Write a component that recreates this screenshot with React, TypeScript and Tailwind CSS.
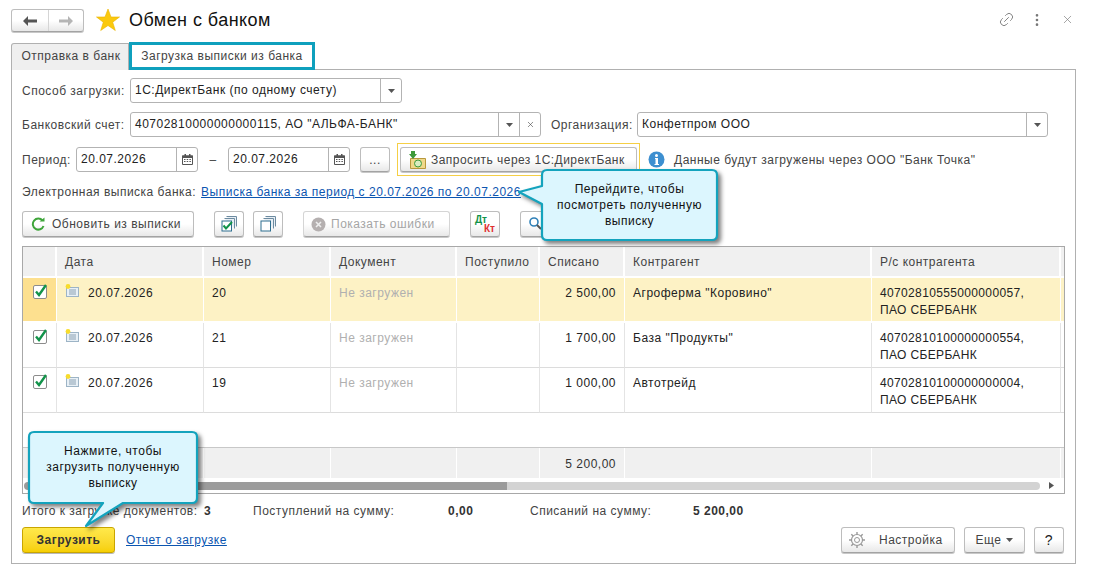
import { Link2, X, MoreVertical } from "lucide-react";
import type { ReactNode } from "react";

const font = { fontFamily: '"Liberation Sans", Arial, sans-serif' };

function Btn({ className = "", children }: { className?: string; children: ReactNode }) {
  return (
    <div
      className={
        "flex items-center justify-center rounded-[3px] border border-[#bdbdbd] border-b-[#a3a3a3] bg-gradient-to-b from-white via-white to-[#e8e8e8] shadow-[0_1px_0_#c8c8c8] " +
        className
      }
    >
      {children}
    </div>
  );
}

function Caret({ color = "#555" }: { color?: string }) {
  return (
    <svg width="7" height="4" viewBox="0 0 7 4">
      <path d="M0 0h7L3.5 4z" fill={color} />
    </svg>
  );
}

function CalendarIcon() {
  return (
    <svg width="11" height="11" viewBox="0 0 11 11">
      <path d="M0.5 2h10v8.5h-10z" fill="#fff" stroke="#555" />
      <rect x="0" y="1.5" width="11" height="2.5" fill="#555" />
      <rect x="2.5" y="0" width="1.5" height="2" fill="#555" />
      <rect x="7" y="0" width="1.5" height="2" fill="#555" />
      <path d="M2 5.5h1.5M4.7 5.5h1.5M7.4 5.5h1.5M2 7.5h1.5M4.7 7.5h1.5M7.4 7.5h1.5" stroke="#555" />
    </svg>
  );
}

function Field({ className = "", text, children }: { className?: string; text: string; children?: ReactNode }) {
  return (
    <div className={"flex h-[25px] items-stretch rounded-[3px] border border-[#b3b3b3] bg-white " + className}>
      <div className="flex-1 truncate pl-[4px] leading-[22px] text-[#222]">{text}</div>
      {children}
    </div>
  );
}

function FieldBtn({ children, w = "w-[21px]" }: { children: ReactNode; w?: string }) {
  return <div className={"flex items-center justify-center border-l border-[#b3b3b3] " + w}>{children}</div>;
}

function Star() {
  return (
    <svg width="24" height="24" viewBox="0 0 24 24">
      <path d="M12 1l3 8h8.5l-6.8 5.2 2.6 8.3L12 17.5l-7.3 5 2.6-8.3L.5 9H9z" fill="#fbc90e" stroke="#e9b300" strokeWidth="0.6" />
    </svg>
  );
}

function DocMark() {
  return (
    <svg width="14" height="13" viewBox="0 0 14 13" className="shrink-0">
      <rect x="1.5" y="3.5" width="12" height="9" fill="#e8f0f6" stroke="#9db4c6" />
      <path d="M4 6h7M4 8h7M4 10h7" stroke="#8aa0b2" />
      <circle cx="3" cy="2.5" r="2.4" fill="#f7dc2c" />
    </svg>
  );
}

function CheckBox() {
  return (
    <svg width="16" height="16" viewBox="0 0 16 16">
      <rect x="1.5" y="2.5" width="13" height="13" rx="1.5" fill="#fff" stroke="#8c8c8c" />
      <path d="M4 8.5l3 3.5L14 2" fill="none" stroke="#12934a" strokeWidth="2.4" />
    </svg>
  );
}

const columns = "grid-cols-[34px_147px_127px_126px_83px_85px_247px_189px_minmax(0,1fr)]";

const rows = [
  { num: "20", sum: "2 500,00", partner: 'Агроферма "Коровино"', acc: "40702810555000000057," },
  { num: "21", sum: "1 700,00", partner: 'База "Продукты"', acc: "40702810100000000554," },
  { num: "19", sum: "1 000,00", partner: "Автотрейд", acc: "40702810100000000004," },
];

function Table() {
  const heads = ["", "Дата", "Номер", "Документ", "Поступило", "Списано", "Контрагент", "Р/с контрагента"];
  return (
    <div className="mt-[9px] flex h-[248px] flex-col overflow-hidden border border-[#a8a8a8] bg-white">
      <div className={"grid h-[31px] shrink-0 bg-[#f0f0f0] " + columns}>
        {heads.map((h, i) => (
          <div key={i} className="min-w-0 border-r-2 border-b-2 border-white pl-[8px] pt-[6px] text-[#444]">
            {h}
          </div>
        ))}
        <div className="border-b-2 border-white" />
      </div>
      {rows.map((r, idx) => {
        const sel = idx === 0;
        const base = sel ? "bg-[#fdf2c5] border-white border-b-2 " : "border-b border-b-[#dcdcdc] border-r-[#e4e4e4] ";
        const cell = "h-[45px] min-w-0 border-r pt-[6px] pl-[8px] " + base;
        return (
          <div key={r.num} className={"grid shrink-0 " + columns}>
            <div className={"flex h-[45px] justify-center pt-[5px] border-r " + (sel ? "bg-[#fde08f] border-white border-b-2" : "border-b border-b-[#dcdcdc] border-r-[#e4e4e4]")}>
              <CheckBox />
            </div>
            <div className={cell + "flex gap-[9px]"}>
              <DocMark />
              <span className="text-[#222]">20.07.2026</span>
            </div>
            <div className={cell + "text-[#222] " + (sel ? "" : "border-r-[#bdbdbd]")}>{r.num}</div>
            <div className={cell + "text-[#b0b0b0]"}>Не загружен</div>
            <div className={cell} />
            <div className={cell + "pr-[8px] text-right text-[#222]"}>{r.sum}</div>
            <div className={cell + "text-[#222]"}>{r.partner}</div>
            <div className={cell + "leading-[17px] pt-[7px] tracking-[0.35px] text-[#222]"}>
              {r.acc}
              <br />
              ПАО СБЕРБАНК
            </div>
            <div className={"h-[45px] min-w-0 " + base} />
          </div>
        );
      })}
      <div className="h-[34px] shrink-0" />
      <div className={"grid h-[31px] shrink-0 border-t border-[#c8c8c8] bg-[#f0f0f0] " + columns}>
        {["", "", "", "", "", "5 200,00", "", ""].map((t, i) => (
          <div key={i} className="min-w-0 border-r border-white pr-[8px] pt-[7px] text-right text-[#333]">
            {t}
          </div>
        ))}
        <div />
      </div>
      <div className="flex flex-1 items-center pl-[1px]">
        <div className="h-[8px] w-[483px] rounded-l-full bg-[#9b9b9b]" />
        <div className="h-[8px] w-[533px] rounded-r-full bg-[#d3d3d3]" />
        <svg width="5" height="7" viewBox="0 0 5 7" className="ml-[9px]">
          <path d="M0 0l5 3.5L0 7z" fill="#555" />
        </svg>
      </div>
    </div>
  );
}

function Callout({
  className,
  w,
  h,
  d,
  textClass,
  lines,
}: {
  className: string;
  w: number;
  h: number;
  d: string;
  textClass: string;
  lines: string[];
}) {
  return (
    <div className={"absolute " + className}>
      <svg width={w} height={h} viewBox={`0 0 ${w} ${h}`} className="drop-shadow-[3px_3px_2px_rgba(0,0,0,0.5)]">
        <path d={d} fill="#dcf6fe" stroke="#14a3bd" strokeWidth="2.2" strokeLinejoin="round" />
      </svg>
      <div className={"absolute text-center leading-[16px] text-[#111] " + textClass}>
        {lines.map((l) => (
          <div key={l}>{l}</div>
        ))}
      </div>
    </div>
  );
}

export default function App() {
  return (
    <div className="relative h-[575px] w-[1093px] overflow-hidden bg-white text-[12px] tracking-[0.5px] text-[#444]" style={font}>
      {/* header */}
      <div className="flex h-[42px] items-start pl-[11px] pt-[9px]">
        <Btn className="h-[23px] w-[73px] !justify-start">
          <div className="flex h-full w-[37px] items-center justify-center border-r border-[#d5d5d5]">
            <svg width="14" height="10" viewBox="0 0 14 10">
              <path d="M0 5l5-5v3.5h9v3H5V10z" fill="#555" />
            </svg>
          </div>
          <div className="flex h-full flex-1 items-center justify-center">
            <svg width="14" height="10" viewBox="0 0 14 10">
              <path d="M14 5L9 0v3.5H0v3h9V10z" fill="#b5b5b5" />
            </svg>
          </div>
        </Btn>
        <div className="ml-[12px] -mt-[1px]">
          <Star />
        </div>
        <div className="ml-[9px] -mt-[2px] text-[18px] leading-[26px] tracking-[0.45px] text-[#111]">Обмен с банком</div>
        <div className="ml-auto flex items-center pr-[19px] pt-[2px] text-[#777]">
          <Link2 size={17} strokeWidth={1.2} className="-rotate-45" />
          <MoreVertical size={16} strokeWidth={2} className="ml-[14px]" />
          <X size={13} strokeWidth={1.2} className="ml-[16px]" />
        </div>
      </div>

      {/* tabs */}
      <div className="relative z-10 flex h-[28px] pl-[11px]">
        <div className="mt-[1px] flex w-[118px] items-center justify-center rounded-tl-[3px] border border-b-0 border-[#b0b0b0] bg-[#efefef] pb-[2px] pl-[2px] text-[#444]">
          Отправка в банк
        </div>
        <div className="flex w-[186px] items-center justify-center border-[3px] border-[#0fa0bd] bg-white pb-[1px] text-[#444]">
          Загрузка выписки из банка
        </div>
      </div>

      {/* panel */}
      <div className="ml-[11px] -mt-[1px] h-[495px] w-[1065px] border border-[#b0b0b0] px-[10px] pt-[8px]">
        <div className="flex h-[25px] items-center">
          <span className="w-[108px] shrink-0">Способ загрузки:</span>
          <Field className="w-[272px]" text="1С:ДиректБанк (по одному счету)">
            <FieldBtn>
              <Caret />
            </FieldBtn>
          </Field>
        </div>

        <div className="mt-[9px] flex h-[25px] items-center">
          <span className="w-[108px] shrink-0">Банковский счет:</span>
          <Field className="w-[411px]" text='40702810000000000115, АО "АЛЬФА-БАНК"'>
            <FieldBtn>
              <Caret />
            </FieldBtn>
            <FieldBtn>
              <X size={9} strokeWidth={1.6} />
            </FieldBtn>
          </Field>
          <span className="ml-[10px] w-[86px] shrink-0">Организация:</span>
          <Field className="w-[411px]" text="Конфетпром ООО">
            <FieldBtn>
              <Caret />
            </FieldBtn>
          </Field>
        </div>

        <div className="mt-[6px] flex h-[33px] items-center">
          <span className="w-[54px] shrink-0">Период:</span>
          <Field className="w-[122px]" text="20.07.2026">
            <FieldBtn>
              <CalendarIcon />
            </FieldBtn>
          </Field>
          <span className="w-[30px] text-center">–</span>
          <Field className="w-[122px]" text="20.07.2026">
            <FieldBtn>
              <CalendarIcon />
            </FieldBtn>
          </Field>
          <Btn className="ml-[10px] h-[25px] w-[30px]">...</Btn>
          <div className="ml-[7px] flex h-[33px] w-[243px] items-center justify-center border border-[#f5cf45]">
            <Btn className="h-[25px] w-[237px] !justify-start pl-[7px]">
              <svg width="20" height="18" viewBox="0 0 20 18">
                <path d="M2.5 7.5h15v10h-15z" fill="#f0d88a" stroke="#b8983c" />
                <circle cx="10" cy="12.5" r="3.5" fill="#d9edc0" stroke="#3e9a3a" />
                <path d="M1 3h2V0h4v3h2L5 8z" fill="#3e9a3a" />
              </svg>
              <span className="ml-[3px] tracking-[0.45px]">Запросить через 1С:ДиректБанк</span>
            </Btn>
          </div>
          <svg width="17" height="17" viewBox="0 0 17 17" className="ml-[8px]">
            <circle cx="8.5" cy="8.5" r="8" fill="#3d8fd0" />
            <circle cx="8.5" cy="4.5" r="1.5" fill="#fff" />
            <path d="M7 7h3v6h1v1H6.5v-1H7.5V8H7z" fill="#fff" />
          </svg>
          <span className="ml-[9px]">Данные будут загружены через ООО "Банк Точка"</span>
        </div>

        <div className="mt-[8px] flex h-[16px] items-center">
          <span>Электронная выписка банка:</span>
          <span className="ml-[5px] text-[#0b55b0] underline">Выписка банка за период с 20.07.2026 по 20.07.2026</span>
        </div>

        <div className="mt-[11px] flex h-[26px] items-center">
          <Btn className="h-[26px] w-[172px] !justify-start pl-[8px]">
            <svg width="14" height="14" viewBox="0 0 14 14">
              <path d="M11.5 3.5A5.5 5.5 0 1 0 12.5 9" fill="none" stroke="#3fa53a" strokeWidth="2" />
              <path d="M8.5 4.5h5v-4z" fill="#3fa53a" />
            </svg>
            <span className="ml-[7px]">Обновить из выписки</span>
          </Btn>
          <Btn className="ml-[20px] h-[26px] w-[30px]">
            <svg width="16" height="16" viewBox="0 0 16 16">
              <path d="M5.5.5h10v10M3.5 2.5h10v10" fill="#e8eff5" stroke="#6d8ba0" />
              <rect x="1" y="5" width="9.5" height="10" fill="#fff" stroke="#2f6f8f" />
              <path d="M2.5 9.5l2.5 3L11 6" fill="none" stroke="#12934a" strokeWidth="2" />
            </svg>
          </Btn>
          <Btn className="ml-[9px] h-[26px] w-[30px]">
            <svg width="16" height="16" viewBox="0 0 16 16">
              <path d="M5.5.5h10v10M3.5 2.5h10v10" fill="#e8eff5" stroke="#6d8ba0" />
              <rect x="1" y="5" width="9.5" height="10" fill="#fff" stroke="#2f6f8f" />
            </svg>
          </Btn>
          <Btn className="ml-[20px] h-[26px] w-[147px] !justify-start border-[#d5d5d5] pl-[7px] text-[#a5a5a5]">
            <svg width="15" height="15" viewBox="0 0 15 15">
              <circle cx="7.5" cy="7.5" r="7" fill="#b5b0b0" />
              <path d="M5 5l5 5M10 5l-5 5" stroke="#eee" strokeWidth="1.6" />
            </svg>
            <span className="ml-[5px]">Показать ошибки</span>
          </Btn>
          <Btn className="ml-[20px] h-[26px] w-[30px]">
            <div className="relative h-[18px] w-[20px] text-[10px] font-bold leading-[9px] tracking-normal">
              <span className="absolute left-0 top-0 text-[#12934a]">Дт</span>
              <span className="absolute right-0 bottom-0 text-[#e03030]">Кт</span>
            </div>
          </Btn>
          <Btn className="ml-[20px] h-[26px] w-[30px]">
            <svg width="14" height="14" viewBox="0 0 14 14">
              <circle cx="6" cy="5" r="4" fill="none" stroke="#2f80b8" strokeWidth="1.6" />
              <path d="M9 8l4 4" stroke="#555" strokeWidth="2" />
            </svg>
          </Btn>
        </div>

        <Table />

        <div className="mt-[9px] flex h-[16px] items-center">
          <span className="w-[182px] shrink-0">Итого к загрузке документов:</span>
          <b className="w-[49px] shrink-0 text-[#333]">3</b>
          <span className="w-[195px] shrink-0">Поступлений на сумму:</span>
          <b className="w-[82px] shrink-0 text-[#333]">0,00</b>
          <span className="w-[163px] shrink-0">Списаний на сумму:</span>
          <b className="text-[#333]">5 200,00</b>
        </div>

        <div className="mt-[8px] flex h-[26px] items-center pr-[1px]">
          <div className="flex h-[26px] w-[93px] items-center justify-center rounded-[3px] border border-[#c9a500] bg-gradient-to-b from-[#ffe94a] to-[#f6cf00] font-bold text-[#333] shadow-[0_1px_0_#b9b9b9]">
            Загрузить
          </div>
          <span className="ml-[11px] text-[#0b55b0] underline">Отчет о загрузке</span>
          <Btn className="ml-auto h-[26px] w-[114px] !justify-start pl-[7px]">
            <svg width="16" height="16" viewBox="0 0 16 16">
              <circle cx="8" cy="8" r="2.5" fill="none" stroke="#999" />
              <circle cx="8" cy="8" r="5.5" fill="none" stroke="#999" strokeWidth="1.2" />
              <path d="M8 0v2.5M8 13.5V16M0 8h2.5M13.5 8H16M2.3 2.3l1.8 1.8M11.9 11.9l1.8 1.8M13.7 2.3l-1.8 1.8M4.1 11.9l-1.8 1.8" stroke="#999" strokeWidth="1.4" />
            </svg>
            <span className="ml-[14px]">Настройка</span>
          </Btn>
          <Btn className="ml-[9px] h-[26px] w-[61px]">
            <span>Еще</span>
            <span className="ml-[5px]">
              <Caret />
            </span>
          </Btn>
          <Btn className="ml-[9px] h-[26px] w-[30px] text-[14px] text-[#222]">?</Btn>
        </div>
      </div>

      {/* callouts */}
      <Callout
        className="left-[515px] top-[166px]"
        w={206}
        h={78}
        d="M4 26 L27 20 L27 9 Q27 4 32 4 L197 4 Q202 4 202 9 L202 69 Q202 74 197 74 L32 74 Q27 74 27 69 L27 38 Z"
        textClass="left-[27px] top-[15px] w-[175px]"
        lines={["Перейдите, чтобы", "посмотреть полученную", "выписку"]}
      />
      <Callout
        className="left-[26px] top-[428px]"
        w={176}
        h={100}
        d="M3 9 Q3 4 8 4 L166 4 Q171 4 171 9 L171 70 Q171 75 166 75 L97 75 L60 98 L77 75 L8 75 Q3 75 3 70 Z"
        textClass="left-[3px] top-[15px] w-[168px]"
        lines={["Нажмите, чтобы", "загрузить полученную", "выписку"]}
      />
    </div>
  );
}
